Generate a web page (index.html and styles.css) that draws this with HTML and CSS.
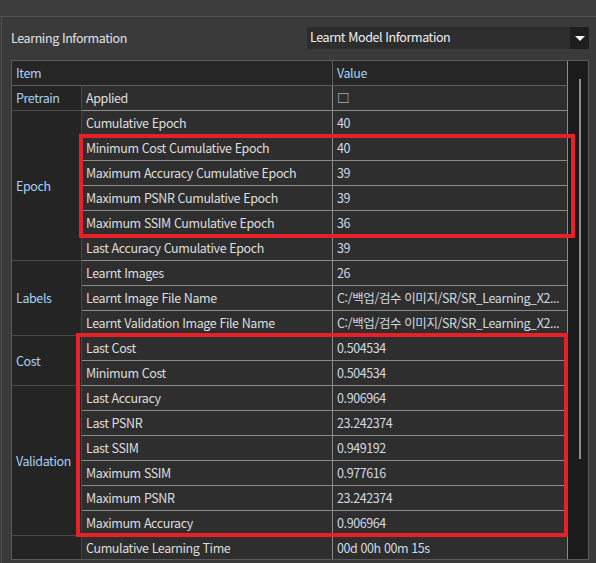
FILE: index.html
```html
<!DOCTYPE html>
<html lang="ko">

<head>
    <meta charset="UTF-8">
    <title>Learning Information</title>
    <link rel="stylesheet" href="styles.css">
</head>

<body>
    <div class="topbar"></div>

    <div class="panel">
        <div class="panel-head">
            <span class="title">Learning Information</span>
            <div class="combo">
                <span class="combo-text">Learnt Model Information</span>
                <span class="combo-btn"><span class="arrow"></span></span>
            </div>
        </div>

        <div class="grid-frame">
            <div class="grid-body">
                <table class="grid">
                    <colgroup>
                        <col class="col-group">
                        <col class="col-item">
                        <col class="col-val">
                    </colgroup>
                    <tr class="head">
                        <td class="item" colspan="2">Item</td>
                        <td class="val">Value</td>
                    </tr>
                    <tr>
                        <td class="group">Pretrain</td>
                        <td class="item">Applied</td>
                        <td class="val">&#9633;</td>
                    </tr>
                    <tr>
                        <td class="group" rowspan="6">Epoch</td>
                        <td class="item">Cumulative Epoch</td>
                        <td class="val">40</td>
                    </tr>
                    <tr><td class="item">Minimum Cost Cumulative Epoch</td><td class="val">40</td></tr>
                    <tr><td class="item">Maximum Accuracy Cumulative Epoch</td><td class="val">39</td></tr>
                    <tr><td class="item">Maximum PSNR Cumulative Epoch</td><td class="val">39</td></tr>
                    <tr><td class="item">Maximum SSIM Cumulative Epoch</td><td class="val">36</td></tr>
                    <tr><td class="item">Last Accuracy Cumulative Epoch</td><td class="val">39</td></tr>
                    <tr>
                        <td class="group" rowspan="3">Labels</td>
                        <td class="item">Learnt Images</td>
                        <td class="val">26</td>
                    </tr>
                    <tr><td class="item">Learnt Image File Name</td><td class="val">C:/백업/검수 이미지/SR/SR_Learning_X2...</td></tr>
                    <tr><td class="item">Learnt Validation Image File Name</td><td class="val">C:/백업/검수 이미지/SR/SR_Learning_X2...</td></tr>
                    <tr>
                        <td class="group" rowspan="2">Cost</td>
                        <td class="item">Last Cost</td>
                        <td class="val">0.504534</td>
                    </tr>
                    <tr><td class="item">Minimum Cost</td><td class="val">0.504534</td></tr>
                    <tr>
                        <td class="group" rowspan="6">Validation</td>
                        <td class="item">Last Accuracy</td>
                        <td class="val">0.906964</td>
                    </tr>
                    <tr><td class="item">Last PSNR</td><td class="val">23.242374</td></tr>
                    <tr><td class="item">Last SSIM</td><td class="val">0.949192</td></tr>
                    <tr><td class="item">Maximum SSIM</td><td class="val">0.977616</td></tr>
                    <tr><td class="item">Maximum PSNR</td><td class="val">23.242374</td></tr>
                    <tr><td class="item">Maximum Accuracy</td><td class="val">0.906964</td></tr>
                    <tr>
                        <td class="group"></td>
                        <td class="item">Cumulative Learning Time</td>
                        <td class="val">00d 00h 00m 15s</td>
                    </tr>
                </table>
            </div>
            <div class="vscroll"><div class="thumb"></div></div>

            <!-- highlight boxes drawn over the grid -->
            <div class="mark mark-epoch"></div>
            <div class="mark mark-cost"></div>
        </div>
    </div>
</body>

</html>
```

FILE: styles.css
```css
/* Dark tool window */
body {
    margin: 0;
    padding: 0;
    background-color: #3c3c3c;
    font-family: 'Noto Sans CJK KR', sans-serif;
    font-size: 12.5px;
    letter-spacing: -0.4px;
    color: #dcdcdc;
    overflow: hidden;
}

.topbar {
    height: 16px;
    border-bottom: 1px solid #525252;
    background-color: #3d3d3d;
}

.panel {
    height: 546px;
    margin-left: 1px;
    border-left: 1px solid #505050;
    background-color: #3a3a3a;
    padding-left: 9px;
    padding-right: 7px;
}

.panel-head {
    display: flex;
    align-items: center;
    justify-content: space-between;
    height: 43px;
}

.title {
    color: #e2e2e2;
    padding-bottom: 3px;
}

.combo {
    display: flex;
    width: 282px;
    height: 22px;
    background-color: #2d2d2d;
    margin-bottom: 1px;
}

.combo-text {
    flex: 1;
    padding-left: 3px;
    line-height: 20px;
    color: #f0f0f0;
}

.combo-btn {
    width: 19px;
    background-color: #1e1e1e;
    display: flex;
    align-items: center;
    justify-content: center;
}

.arrow {
    width: 0;
    height: 0;
    border-left: 5px solid transparent;
    border-right: 5px solid transparent;
    border-top: 5px solid #f4f4f4;
}

/* Property grid */
.grid-frame {
    position: relative;
    display: flex;
    height: 498px;
    border: 1px solid #5a5a5a;
    overflow: hidden;
}

.grid-body {
    width: 556px;
    overflow: hidden;
}

.grid {
    width: 556px;
    border-collapse: separate;
    border-spacing: 0;
    table-layout: fixed;
}

.col-group {
    width: 70px;
}

.col-item {
    width: 251px;
}

.col-val {
    width: 235px;
}

.grid tr {
    height: 25px;
}

.grid td {
    padding: 0 0 0 4px;
    border-bottom: 1px solid #8a8a8a;
    background-color: #2e2e2e;
    white-space: nowrap;
    overflow: hidden;
    text-overflow: ellipsis;
    line-height: 22px;
}

.grid td.item {
    border-right: 1px solid #8a8a8a;
    color: #dedede;
}

.grid td.val {
    border-right: 1px solid #8a8a8a;
    color: #d2dae4;
}

.grid td.group {
    background-color: #242424;
    border-right: 1px solid #474747;
    border-bottom-color: #4a4a4a;
    color: #a6d2f5;
}

.grid tr.head td {
    background-color: #262626;
    border-bottom-color: #5e5e5e;
    color: #a6d2f5;
}

.grid tr.head td.item {
    border-right-color: #5e5e5e;
}

.vscroll {
    position: relative;
    flex: 1;
    background-color: #1b1b1b;
}

.thumb {
    position: absolute;
    left: 11px;
    top: 18px;
    width: 2px;
    height: 380px;
    background-color: #8e8e8e;
}

/* Red annotation boxes */
.mark {
    position: absolute;
    border: 4px solid #e8202a;
    box-sizing: border-box;
}

.mark-epoch {
    left: 67px;
    top: 73px;
    width: 496px;
    height: 104px;
}

.mark-cost {
    left: 64px;
    top: 272px;
    width: 492px;
    height: 204px;
}
```
